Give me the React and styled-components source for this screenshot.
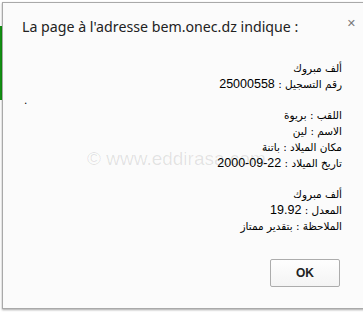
import styled, { createGlobalStyle } from "styled-components";

const Global = createGlobalStyle`
  html, body {
    margin: 0;
    padding: 0;
    background: #ffffff;
    overflow: hidden;
  }
`;

const lines = [
  { label: "ألف مبروك" },
  { label: "رقم التسجيل : ", value: "25000558" },
  { label: ".", ltr: true },
  { label: "اللقب : بريوة" },
  { label: "الاسم : لين" },
  { label: "مكان الميلاد : باتنة" },
  { label: "تاريخ الميلاد : ", value: "2000-09-22" },
  { label: "" },
  { label: "ألف مبروك" },
  { label: "المعدل : ", value: "19.92" },
  { label: "الملاحظة : بتقدير ممتاز" },
];

const App = () => {
  return (
    <Page>
      <Global />
      <Strip>
        <StripGreen />
      </Strip>
      <Dialog>
        <Header>
          <Title>La page à l'adresse bem.onec.dz indique :</Title>
          <Close>✕</Close>
        </Header>
        <Message>
          {lines.map((line, i) => (
            <Line key={i} $ltr={line.ltr}>
              {line.label || "\u00a0"}
              {line.value && <Value>{line.value}</Value>}
            </Line>
          ))}
        </Message>
        <Footer>
          <OkButton>OK</OkButton>
        </Footer>
        <Watermark>© www.eddirasa.com</Watermark>
      </Dialog>
    </Page>
  );
};

const Page = styled.div`
  display: flex;
  width: 363px;
  height: 313px;
  overflow: hidden;
  background: #ffffff;
`;

const Strip = styled.div`
  width: 2px;
  flex-shrink: 0;
  padding-top: 26px;
`;

const StripGreen = styled.div`
  height: 74px;
  background: #139413;
`;

const Dialog = styled.div`
  position: relative;
  flex-shrink: 0;
  margin-top: 2px;
  width: 420px;
  height: 307px;
  background: #fbfbfb;
  border: 1px solid #a9a9a9;
  box-shadow: 0 1px 2px rgba(0, 0, 0, 0.35);
  padding: 0 0 0 19px;
  box-sizing: border-box;
  display: flex;
  flex-direction: column;
  align-items: flex-start;
`;

const Header = styled.div`
  display: flex;
  align-items: center;
  width: 334px;
  height: 38px;
  padding-top: 4px;
  box-sizing: border-box;
  justify-content: space-between;
`;

const Title = styled.div`
  font-family: "Noto Sans", "Open Sans", sans-serif;
  font-size: 14.2px;
  color: #222222;
  padding-top: 5px;
`;

const Close = styled.div`
  font-family: "DejaVu Sans", sans-serif;
  font-weight: bold;
  font-size: 11px;
  color: #7a7a7a;
  margin-top: -1px;
`;

const Message = styled.div`
  width: 320px;
  padding-top: 20px;
  display: flex;
  flex-direction: column;
`;

const Line = styled.div`
  direction: ${(p) => (p.$ltr ? "ltr" : "rtl")};
  text-align: ${(p) => (p.$ltr ? "left" : "right")};
  font-family: "DejaVu Sans", "Liberation Sans", sans-serif;
  font-size: 10.5px;
  line-height: 15.8px;
  color: #000000;
  padding-left: ${(p) => (p.$ltr ? "2px" : "0")};
`;

const Value = styled.bdi`
  direction: ltr;
  unicode-bidi: isolate;
  font-family: "Liberation Sans", sans-serif;
  font-size: 12.5px;
`;

const Footer = styled.div`
  width: 318px;
  display: flex;
  justify-content: flex-end;
  margin-top: auto;
  margin-bottom: 21px;
`;

const OkButton = styled.button`
  width: 70px;
  height: 28px;
  background: linear-gradient(#fefefe, #f4f4f4);
  border: 1px solid #acacac;
  border-radius: 2px;
  font-family: "Liberation Sans", sans-serif;
  font-weight: bold;
  font-size: 12px;
  color: #222222;
  padding: 0;
`;

const Watermark = styled.div`
  position: absolute;
  left: 84px;
  top: 145px;
  font-family: "Liberation Sans", sans-serif;
  font-size: 19px;
  color: rgba(0, 0, 0, 0.1);
  pointer-events: none;
  white-space: nowrap;
`;

export default App;
